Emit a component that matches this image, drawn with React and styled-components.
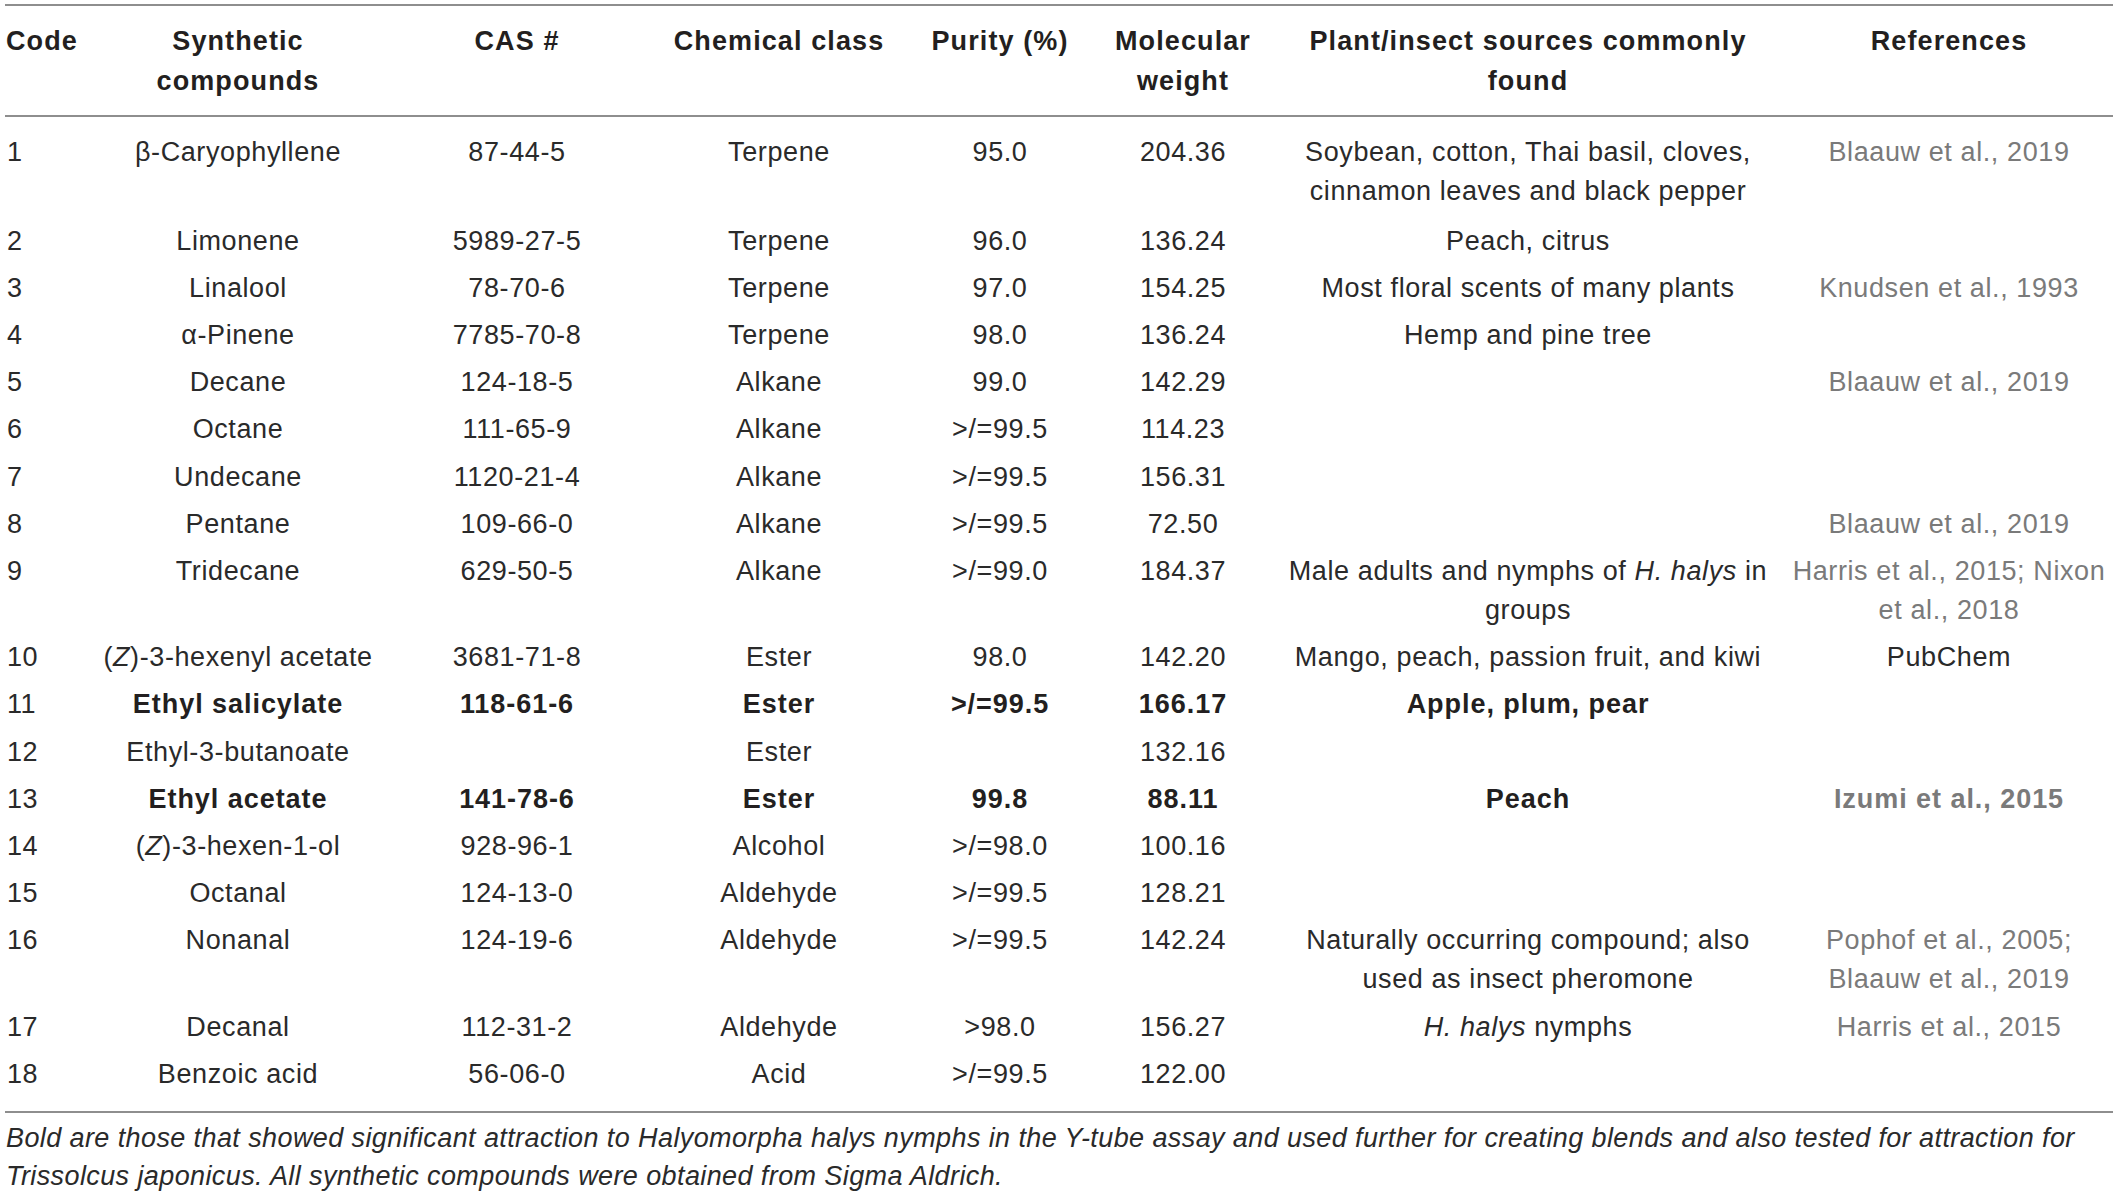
import React from "react";
import styled, { createGlobalStyle } from "styled-components";

const Global = createGlobalStyle`
  html, body { margin: 0; padding: 0; background: #ffffff; }
  body { font-family: "Liberation Sans", Arial, sans-serif; color: #262626; }
`;

const Page = styled.div`
  padding: 4px 5px 0 5px;
  width: 2108px;
`;

const Table = styled.div`
  border-top: 2px solid #8e8e8e;
`;

const COLS = "90px 286px 272px 252px 190px 176px 514px 1fr";

const HeadRow = styled.div`
  display: grid;
  grid-template-columns: ${COLS};
  padding: 16px 0 14px;
  border-bottom: 2px solid #8e8e8e;
`;

const HeadCell = styled.div`
  font-weight: 700;
  font-size: 27px;
  line-height: 39.5px;
  letter-spacing: 1.1px;
  color: #231f20;
  text-align: ${(p) => (p.$left ? "left" : "center")};
  padding-left: ${(p) => (p.$left ? "1px" : "0")};
  white-space: nowrap;
`;

const Body = styled.div`
  padding: 12px 0 13px;
  border-bottom: 2px solid #8e8e8e;
`;

const Row = styled.div`
  display: grid;
  grid-template-columns: ${COLS};
  padding: 3.8px 0;
  &:first-child {
    padding-bottom: 6.5px;
  }
`;

const Cell = styled.div`
  font-size: 27px;
  line-height: 39.5px;
  font-weight: ${(p) => (p.$bold ? 700 : 400)};
  letter-spacing: ${(p) => (p.$bold ? "0.95px" : "0.6px")};
  color: ${(p) => (p.$muted ? "#7a7a7a" : p.$bold ? "#231f20" : "#2a2a2a")};
  text-align: ${(p) => (p.$left ? "left" : "center")};
  padding-left: ${(p) => (p.$left ? "2px" : "0")};
  white-space: nowrap;
`;

const Note = styled.p`
  margin: 0;
  padding: 6px 0 0 1px;
  font-size: 27px;
  line-height: 38.5px;
  letter-spacing: 0.4px;
  font-style: italic;
  color: #2a2a2a;
  white-space: nowrap;
`;

const headers = [
  "Code",
  <>Synthetic<br />compounds</>,
  "CAS #",
  "Chemical class",
  "Purity (%)",
  <>Molecular<br />weight</>,
  <>Plant/insect sources commonly<br />found</>,
  "References",
];

const rows = [
  { c: ["1", "β-Caryophyllene", "87-44-5", "Terpene", "95.0", "204.36",
      <>Soybean, cotton, Thai basil, cloves,<br />cinnamon leaves and black pepper</>,
      "Blaauw et al., 2019"], ref: "muted" },
  { c: ["2", "Limonene", "5989-27-5", "Terpene", "96.0", "136.24", "Peach, citrus", ""] },
  { c: ["3", "Linalool", "78-70-6", "Terpene", "97.0", "154.25", "Most floral scents of many plants", "Knudsen et al., 1993"], ref: "muted" },
  { c: ["4", "α-Pinene", "7785-70-8", "Terpene", "98.0", "136.24", "Hemp and pine tree", ""] },
  { c: ["5", "Decane", "124-18-5", "Alkane", "99.0", "142.29", "", "Blaauw et al., 2019"], ref: "muted" },
  { c: ["6", "Octane", "111-65-9", "Alkane", ">/=99.5", "114.23", "", ""] },
  { c: ["7", "Undecane", "1120-21-4", "Alkane", ">/=99.5", "156.31", "", ""] },
  { c: ["8", "Pentane", "109-66-0", "Alkane", ">/=99.5", "72.50", "", "Blaauw et al., 2019"], ref: "muted" },
  { c: ["9", "Tridecane", "629-50-5", "Alkane", ">/=99.0", "184.37",
      <>Male adults and nymphs of <i>H. halys</i> in<br />groups</>,
      <>Harris et al., 2015; Nixon<br />et al., 2018</>], ref: "muted" },
  { c: ["10", <>(<i>Z</i>)-3-hexenyl acetate</>, "3681-71-8", "Ester", "98.0", "142.20", "Mango, peach, passion fruit, and kiwi", "PubChem"] },
  { c: ["11", "Ethyl salicylate", "118-61-6", "Ester", ">/=99.5", "166.17", "Apple, plum, pear", ""], bold: true },
  { c: ["12", "Ethyl-3-butanoate", "", "Ester", "", "132.16", "", ""] },
  { c: ["13", "Ethyl acetate", "141-78-6", "Ester", "99.8", "88.11", "Peach", "Izumi et al., 2015"], bold: true, ref: "muted" },
  { c: ["14", <>(<i>Z</i>)-3-hexen-1-ol</>, "928-96-1", "Alcohol", ">/=98.0", "100.16", "", ""] },
  { c: ["15", "Octanal", "124-13-0", "Aldehyde", ">/=99.5", "128.21", "", ""] },
  { c: ["16", "Nonanal", "124-19-6", "Aldehyde", ">/=99.5", "142.24",
      <>Naturally occurring compound; also<br />used as insect pheromone</>,
      <>Pophof et al., 2005;<br />Blaauw et al., 2019</>], ref: "muted" },
  { c: ["17", "Decanal", "112-31-2", "Aldehyde", ">98.0", "156.27", <><i>H. halys</i> nymphs</>, "Harris et al., 2015"], ref: "muted" },
  { c: ["18", "Benzoic acid", "56-06-0", "Acid", ">/=99.5", "122.00", "", ""] },
];

export default function App() {
  return (
    <>
      <Global />
      <Page>
        <Table>
          <HeadRow>
            {headers.map((h, i) => (
              <HeadCell key={i} $left={i === 0}>{h}</HeadCell>
            ))}
          </HeadRow>
          <Body>
            {rows.map((r, ri) => (
              <Row key={ri}>
                {r.c.map((v, ci) => (
                  <Cell
                    key={ci}
                    $left={ci === 0}
                    $bold={r.bold && ci > 0}
                    $muted={ci === 7 && r.ref === "muted"}
                  >
                    {v}
                  </Cell>
                ))}
              </Row>
            ))}
          </Body>
        </Table>
        <Note>
          Bold are those that showed significant attraction to Halyomorpha halys nymphs in the Y-tube assay and used further for creating blends and also tested for attraction for
          <br />
          Trissolcus japonicus. All synthetic compounds were obtained from Sigma Aldrich.
        </Note>
      </Page>
    </>
  );
}
